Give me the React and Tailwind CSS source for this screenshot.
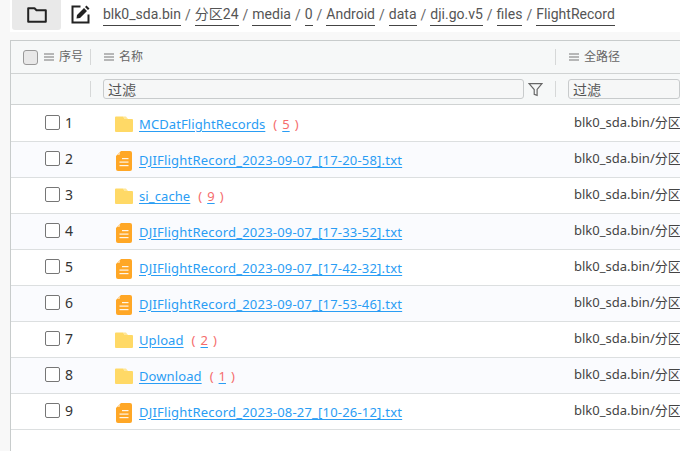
import React from "react";

const FolderIcon = () => (
  <svg width="18" height="16" viewBox="0 0 18 16" className="mb-[2px] shrink-0">
    <path d="M1 0.5 H8 L10 3 H17 a1 1 0 0 1 1 1 V15 a1 1 0 0 1 -1 1 H1 a1 1 0 0 1 -1 -1 V1.5 a1 1 0 0 1 1 -1 Z" fill="#ffd966" />
    <path d="M8 0.5 H11 L13 3 H10 Z" fill="#ffe79a" />
  </svg>
);

const FileIcon = () => (
  <svg width="16" height="20" viewBox="0 0 16 20" className="shrink-0">
    <path d="M5 0 H14 a2 2 0 0 1 2 2 V18 a2 2 0 0 1 -2 2 H2 a2 2 0 0 1 -2 -2 V5 Z" fill="#ffa726" />
    <path d="M4 .8 V3 a1 1 0 0 1 -1 1 H.8 Z" fill="#ffd9a0" />
    <rect x="6" y="7" width="6.5" height="1.2" fill="#fff" opacity="0.9" />
    <rect x="3.5" y="10.5" width="9" height="1.2" fill="#fff" opacity="0.9" />
    <rect x="3.5" y="14" width="9" height="1.2" fill="#fff" opacity="0.9" />
  </svg>
);

const ColIcon = () => (
  <svg width="10" height="8" viewBox="0 0 10 8" className="shrink-0">
    <path d="M0 1 H10 M0 4 H10 M0 7 H10" stroke="#777" strokeWidth="1" fill="none" />
  </svg>
);

const crumbs = ["blk0_sda.bin", "分区24", "media", "0", "Android", "data", "dji.go.v5", "files", "FlightRecord"];

const rows = [
  { n: 1, name: "MCDatFlightRecords", count: 5 },
  { n: 2, name: "DJIFlightRecord_2023-09-07_[17-20-58].txt" },
  { n: 3, name: "si_cache", count: 9 },
  { n: 4, name: "DJIFlightRecord_2023-09-07_[17-33-52].txt" },
  { n: 5, name: "DJIFlightRecord_2023-09-07_[17-42-32].txt" },
  { n: 6, name: "DJIFlightRecord_2023-09-07_[17-53-46].txt" },
  { n: 7, name: "Upload", count: 2 },
  { n: 8, name: "Download", count: 1 },
  { n: 9, name: "DJIFlightRecord_2023-08-27_[10-26-12].txt" },
];

const Row = ({ row }) => (
  <div className={`flex h-[36px] items-center border-b border-[#dcdfe0] text-[13px] ${row.n % 2 === 0 ? "bg-[#fafbfe]" : "bg-white"}`}>
    <div className="flex w-[93px] shrink-0 items-center pl-[34px]">
      <span className="mb-[2px] h-[15px] w-[15px] rounded-[2px] border-[1.5px] border-[#767676] bg-white" />
      <span className="mb-[3px] ml-[5px] text-[14px] text-[#333]">{row.n}</span>
    </div>
    <div className="flex w-[470px] shrink-0 items-center pt-[2px]">
      <div className="ml-[11px] flex w-[18px] shrink-0 justify-center">
        {row.count ? <FolderIcon /> : <FileIcon />}
      </div>
      <a className={`ml-[6px] text-[#2a9df4] underline underline-offset-2 ${row.count ? "tracking-[0.1px]" : "tracking-[0.2px]"}`}>{row.name}</a>
      {row.count ? (
        <span className="ml-[8px] flex whitespace-pre text-[#f56c6c]">
          <span>(</span>
          <span className="px-[5px] underline underline-offset-2 decoration-[#2a9df4]">{row.count}</span>
          <span>)</span>
        </span>
      ) : null}
    </div>
    <div className="whitespace-nowrap pb-[1px] text-[#444]">blk0_sda.bin/分区24/media/0</div>
  </div>
);

const FilterInput = ({ className }) => (
  <div className={`flex h-[20px] items-center rounded-[3px] border border-[#c8cbcc] bg-[#f6f7f7] pl-[4px] text-[14px] text-[#555] ${className}`}>
    过滤
  </div>
);

export default function App() {
  return (
    <div
      className="h-[451px] w-[680px] overflow-hidden bg-[#f8f8f8]"
      style={{ fontFamily: '"Noto Sans", "Noto Sans CJK SC", sans-serif' }}
    >
      <div className="ml-[10px] flex h-[32px] items-center bg-white">
        <div className="mb-[2px] ml-[2px] flex h-[30px] w-[49px] shrink-0 items-center justify-center rounded-b-[3px] bg-[#e9e9e9]">
          <svg width="20" height="16" viewBox="0 0 20 16">
            <path d="M1.2 1.2 H7.5 L9.5 3.2 H18.8 V14.8 H1.2 Z" fill="none" stroke="#222" strokeWidth="2" strokeLinejoin="round" />
          </svg>
        </div>
        <svg width="19" height="19" viewBox="0 0 19 19" className="mb-[3px] ml-[10px] shrink-0">
          <path d="M17.5 9.5 V17.5 H1.5 V1.5 H9.5" fill="none" stroke="#222" strokeWidth="2" />
          <path d="M5.5 13.5 L6 10 L13 3 L16 6 L9 13 Z M14 2 L15.5 0.5 L18.5 3.5 L17 5 Z" fill="#222" />
        </svg>
        <div
          className="mb-[2px] ml-[13px] flex items-center whitespace-nowrap text-[14px] text-[#555]"
          style={{ fontFamily: 'Roboto, "Noto Sans CJK SC", sans-serif' }}
        >
          {crumbs.map((c, i) => (
            <React.Fragment key={c}>
              {i > 0 && <span className="mx-[4px] text-[#666]">/</span>}
              <span className="border-b border-[#444] leading-[21px]">{c}</span>
            </React.Fragment>
          ))}
        </div>
      </div>

      <div className="ml-[10px] mt-[8px] h-[411px] border-l border-t border-[#c8cccc] bg-white">
        <div className="flex h-[33px] items-center border-b border-[#d0d3d3] bg-[#f6f8f8] text-[12px] text-[#666]">
          <div className="flex w-[80px] shrink-0 items-center pl-[12px]">
            <span className="h-[15px] w-[15px] rounded-[3px] border border-[#999] bg-[#e8e8e8]" />
            <span className="ml-[6px]"><ColIcon /></span>
            <span className="ml-[5px]">序号</span>
            <span className="ml-[7px] h-[16px] border-l border-[#d6d8d8]" />
          </div>
          <div className="flex w-[464px] shrink-0 items-center pl-[13px]">
            <ColIcon />
            <span className="ml-[5px]">名称</span>
          </div>
          <div className="flex items-center">
            <span className="h-[16px] border-l border-[#d6d8d8]" />
            <span className="ml-[13px]"><ColIcon /></span>
            <span className="ml-[5px] text-[12px]">全路径</span>
          </div>
        </div>
        <div className="flex h-[31px] items-center border-b border-[#d0d3d3] bg-[#f6f8f8]">
          <div className="flex w-[80px] shrink-0 justify-end">
            <span className="h-[16px] border-l border-[#d6d8d8]" />
          </div>
          <div className="flex w-[464px] shrink-0 items-center pl-[12px]">
            <FilterInput className="w-[421px] shrink-0" />
            <svg width="15" height="15" viewBox="0 0 14 14" className="ml-[4px] shrink-0">
              <path d="M1 1.5 H13 L8.5 7 V12.5 L5.8 11.5 V7 Z" fill="none" stroke="#666" strokeWidth="1.1" />
            </svg>
          </div>
          <span className="h-[16px] border-l border-[#d6d8d8]" />
          <FilterInput className="ml-[12px] flex-1" />
        </div>
        <div className="mt-[1px]">
          {rows.map((r) => (
            <Row key={r.n} row={r} />
          ))}
        </div>
      </div>
    </div>
  );
}
